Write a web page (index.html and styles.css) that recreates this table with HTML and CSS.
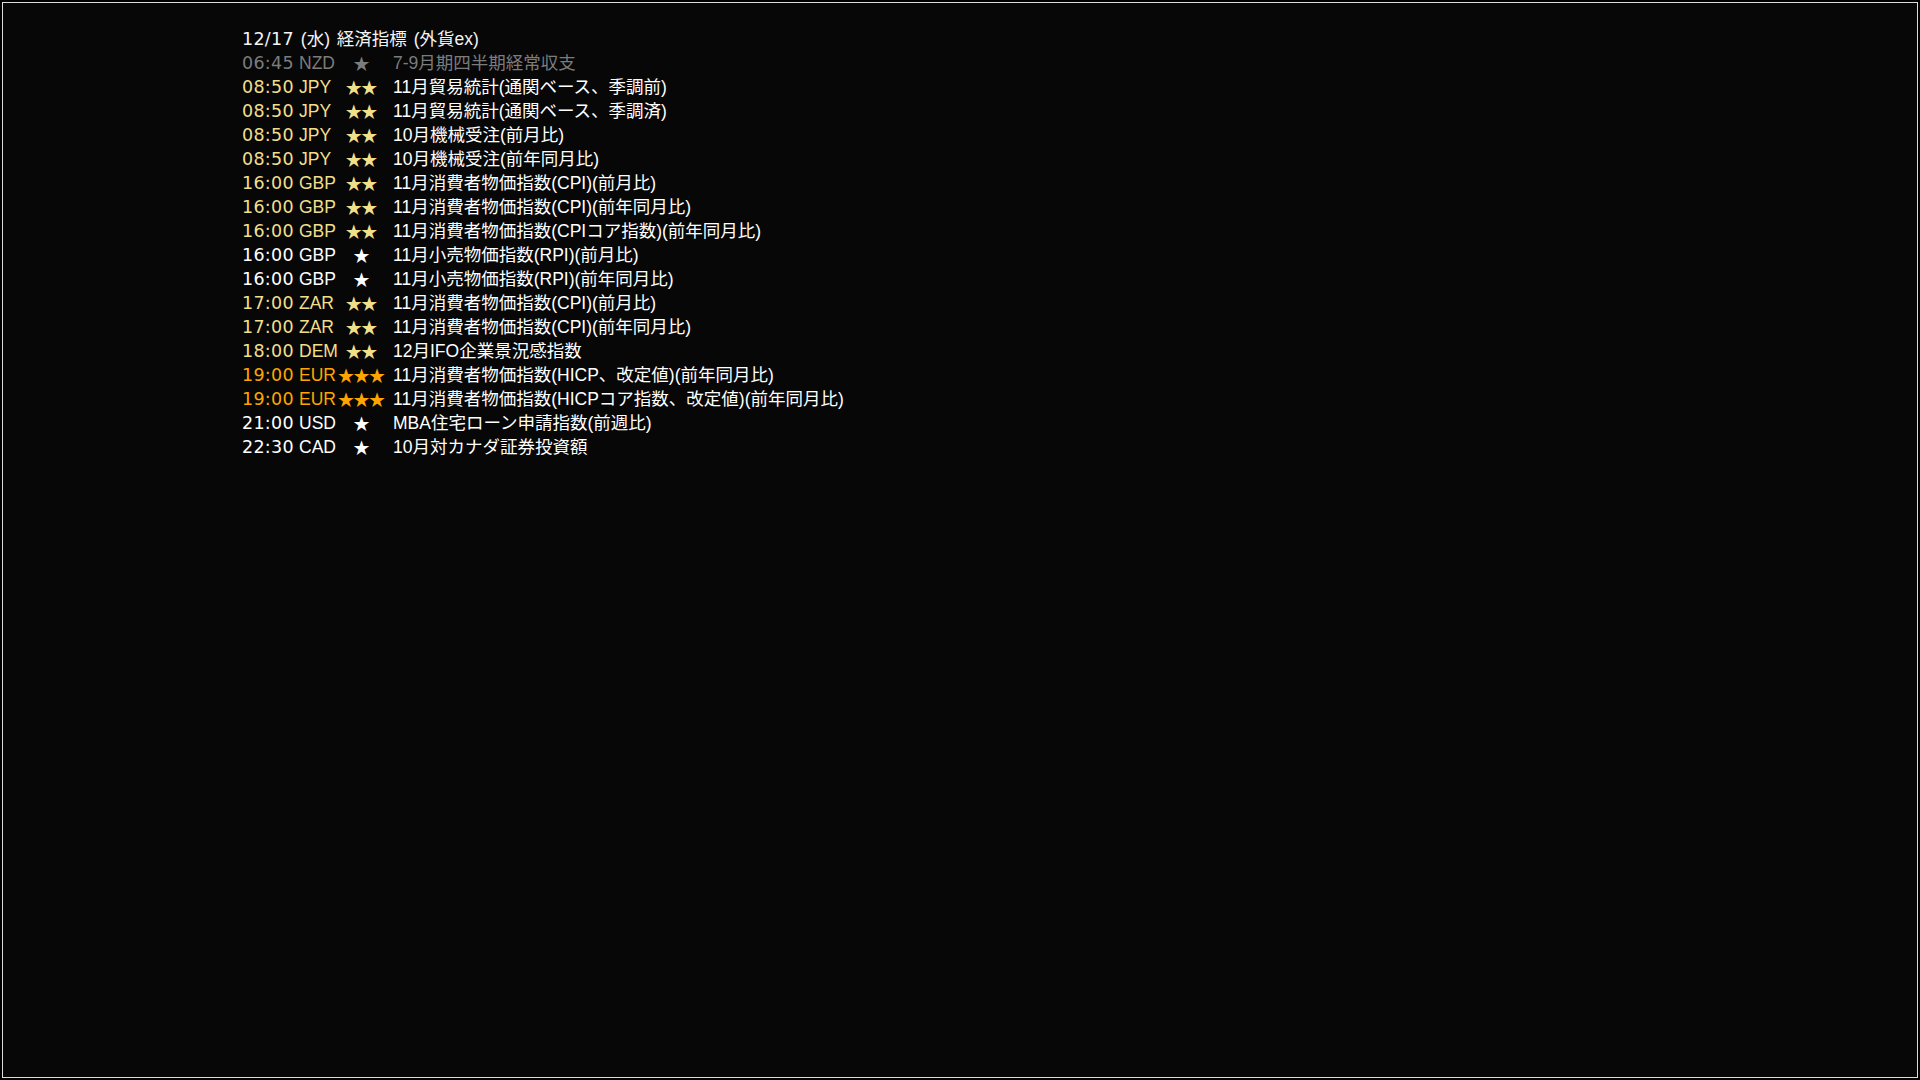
FILE: index.html
```html
<!DOCTYPE html>
<html lang="ja">
<head>
<meta charset="utf-8">
<title>経済指標</title>
<link rel="stylesheet" href="styles.css">
</head>
<body>
<div class="panel">
  <div class="title"><span class="date">12/17</span> (水) 経済指標 (外貨ex)</div>
  <div class="list">
    <div class="row lv-low"><span class="time">06:45</span><span class="cur">NZD</span><span class="stars">★</span><span class="ev">7-9月期四半期経常収支</span></div>
    <div class="row lv-2"><span class="time">08:50</span><span class="cur">JPY</span><span class="stars">★★</span><span class="ev">11月貿易統計(通関ベース、季調前)</span></div>
    <div class="row lv-2"><span class="time">08:50</span><span class="cur">JPY</span><span class="stars">★★</span><span class="ev">11月貿易統計(通関ベース、季調済)</span></div>
    <div class="row lv-2"><span class="time">08:50</span><span class="cur">JPY</span><span class="stars">★★</span><span class="ev">10月機械受注(前月比)</span></div>
    <div class="row lv-2"><span class="time">08:50</span><span class="cur">JPY</span><span class="stars">★★</span><span class="ev">10月機械受注(前年同月比)</span></div>
    <div class="row lv-2"><span class="time">16:00</span><span class="cur">GBP</span><span class="stars">★★</span><span class="ev">11月消費者物価指数(CPI)(前月比)</span></div>
    <div class="row lv-2"><span class="time">16:00</span><span class="cur">GBP</span><span class="stars">★★</span><span class="ev">11月消費者物価指数(CPI)(前年同月比)</span></div>
    <div class="row lv-2"><span class="time">16:00</span><span class="cur">GBP</span><span class="stars">★★</span><span class="ev">11月消費者物価指数(CPIコア指数)(前年同月比)</span></div>
    <div class="row lv-1"><span class="time">16:00</span><span class="cur">GBP</span><span class="stars">★</span><span class="ev">11月小売物価指数(RPI)(前月比)</span></div>
    <div class="row lv-1"><span class="time">16:00</span><span class="cur">GBP</span><span class="stars">★</span><span class="ev">11月小売物価指数(RPI)(前年同月比)</span></div>
    <div class="row lv-2"><span class="time">17:00</span><span class="cur">ZAR</span><span class="stars">★★</span><span class="ev">11月消費者物価指数(CPI)(前月比)</span></div>
    <div class="row lv-2"><span class="time">17:00</span><span class="cur">ZAR</span><span class="stars">★★</span><span class="ev">11月消費者物価指数(CPI)(前年同月比)</span></div>
    <div class="row lv-2"><span class="time">18:00</span><span class="cur">DEM</span><span class="stars">★★</span><span class="ev">12月IFO企業景況感指数</span></div>
    <div class="row lv-3"><span class="time">19:00</span><span class="cur">EUR</span><span class="stars">★★★</span><span class="ev">11月消費者物価指数(HICP、改定値)(前年同月比)</span></div>
    <div class="row lv-3"><span class="time">19:00</span><span class="cur">EUR</span><span class="stars">★★★</span><span class="ev">11月消費者物価指数(HICPコア指数、改定値)(前年同月比)</span></div>
    <div class="row lv-1"><span class="time">21:00</span><span class="cur">USD</span><span class="stars">★</span><span class="ev">MBA住宅ローン申請指数(前週比)</span></div>
    <div class="row lv-1"><span class="time">22:30</span><span class="cur">CAD</span><span class="stars">★</span><span class="ev">10月対カナダ証券投資額</span></div>
  </div>
</div>
</body>
</html>
```

FILE: styles.css
```css
html, body {
  margin: 0;
  padding: 0;
  background: #000;
  width: 1920px;
  height: 1080px;
  overflow: hidden;
}

body {
  padding: 2px;
  box-sizing: border-box;
  font-family: "Liberation Sans", "Noto Sans CJK JP", sans-serif;
  font-size: 17.5px;
  color: #ffffff;
}

.panel {
  box-sizing: border-box;
  width: 100%;
  height: 100%;
  border: 1px solid #dcdcdc;
  background: #070707;
  padding: 24px 0 0 239px;
  line-height: 24px;
}

.title {
  color: #f4f4f4;
  white-space: nowrap;
  word-spacing: 2px;
}

.date,
.time {
  font-family: "DejaVu Sans", "Liberation Sans", sans-serif;
  font-size: 17.5px;
  letter-spacing: 0.3px;
}

.row {
  display: grid;
  grid-template-columns: 57px 36px 52px auto;
  white-space: nowrap;
}

.ev {
  padding-left: 6px;
}

.stars {
  font-family: "Noto Sans CJK JP", sans-serif;
  text-align: center;
  font-size: 16.5px;
  letter-spacing: -1px;
}

.lv-low .time,
.lv-low .cur,
.lv-low .stars,
.lv-low .ev { color: #7c7c7c; }

.lv-1 .time,
.lv-1 .cur,
.lv-1 .stars { color: #ffffff; }

.lv-2 .time,
.lv-2 .cur,
.lv-2 .stars { color: #f2df8a; }

.lv-3 .time,
.lv-3 .cur,
.lv-3 .stars { color: #ffa500; }
```
